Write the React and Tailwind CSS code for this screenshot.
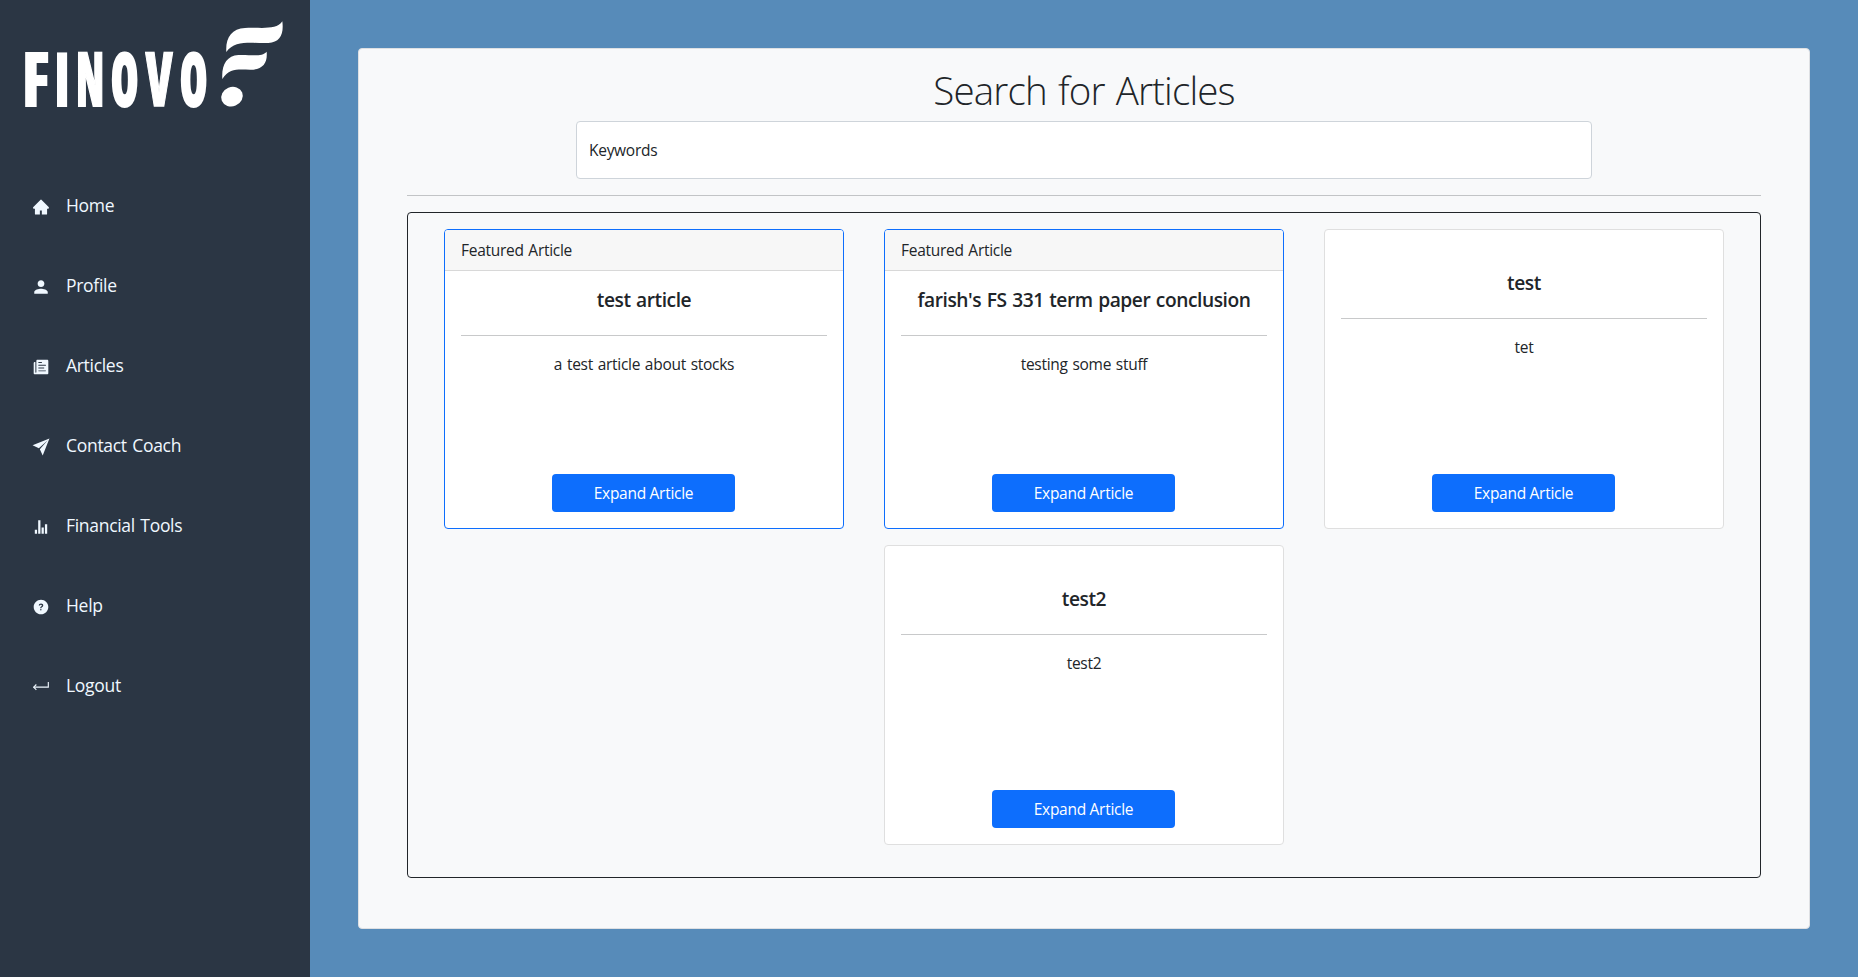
import { AiFillHome } from 'react-icons/ai';
import { IoIosHelpCircle, IoIosPaper, IoMdPerson, IoMdStats } from 'react-icons/io';
import { IoPaperPlaneSharp, IoReturnDownBackSharp } from 'react-icons/io5';

const NAV = [
  { label: 'Home', Icon: AiFillHome, offset: 'mt-1' },
  { label: 'Profile', Icon: IoMdPerson, offset: 'mt-1' },
  { label: 'Articles', Icon: IoIosPaper, offset: 'mt-1' },
  { label: 'Contact Coach', Icon: IoPaperPlaneSharp, offset: 'mt-1' },
  { label: 'Financial Tools', Icon: IoMdStats, offset: 'mt-1' },
  { label: 'Help', Icon: IoIosHelpCircle, offset: 'mt-1' },
  { label: 'Logout', Icon: IoReturnDownBackSharp, offset: 'mt-0.5' },
];

const ARTICLES = [
  { title: 'test article', text: 'a test article about stocks', featured: true },
  { title: "farish's FS 331 term paper conclusion", text: 'testing some stuff', featured: true },
  { title: 'test', text: 'tet', featured: false },
  { title: 'test2', text: 'test2', featured: false },
];

// Each letter of the wordmark has its own centre and horizontal squeeze.
const WORDMARK = [
  { char: 'F', x: 35.6, squeeze: 0.87, stroke: 0 },
  { char: 'I', x: 62, squeeze: 0.77, stroke: 0 },
  { char: 'N', x: 90, squeeze: 0.56, stroke: 2 },
  { char: 'O', x: 124.5, squeeze: 0.57, stroke: 3 },
  { char: 'V', x: 159, squeeze: 0.63, stroke: 1.5 },
  { char: 'O', x: 193.5, squeeze: 0.57, stroke: 3 },
];

function Logo() {
  return (
    <svg width="310" height="130" viewBox="0 0 310 130" fill="#fff" role="img" className="block">
      {WORDMARK.map(({ char, x, squeeze, stroke }, i) => (
        <text
          key={i}
          transform={`translate(${x} ${107 - stroke / 2}) scale(${squeeze} ${1 - stroke * 0.018})`}
          textAnchor="middle"
          stroke="#fff"
          strokeWidth={stroke}
          className="font-['Open_Sans',sans-serif] text-[77px] font-extrabold [font-stretch:75%]"
        >
          {char}
        </text>
      ))}
      <g transform="translate(210 10) scale(0.3333)">
        <path d="M49 126C46 85 64 56 105 54C150 51 199 62 217 34C222 74 210 96 175 99C130 101 75 88 49 126Z" />
        <path d="M37 207C34 165 50 137 85 135C120 133 154 143 170 125C173 158 160 176 130 179C95 181 61 169 37 207Z" />
        <ellipse cx="66" cy="260" rx="33" ry="29" transform="rotate(-22 66 260)" />
      </g>
    </svg>
  );
}

function Sidebar() {
  return (
    <aside className="flex w-[310px] shrink-0 flex-col bg-[#2b3644]">
      <Logo />
      <nav className="flex flex-col pt-[35px]">
        {NAV.map(({ label, Icon, offset }) => (
          <a
            key={label}
            className="flex h-20 items-center pl-8 text-[17.5px] tracking-[-0.3px] text-[#f0f8ff] [word-spacing:1.2px]"
          >
            <Icon size={18} className={`${offset} shrink-0`} />
            <span className="ml-4">{label}</span>
          </a>
        ))}
      </nav>
    </aside>
  );
}

function ArticleCard({ title, text, featured }) {
  return (
    <article
      className={
        featured
          ? 'flex h-[300px] w-[400px] flex-col overflow-hidden rounded border border-[#0d6efd] bg-white'
          : 'flex h-[300px] w-[400px] flex-col overflow-hidden rounded border border-[#dfdfdf] bg-white'
      }
    >
      {featured && (
        <header className="border-b border-[#d8d8d8] bg-[#f7f7f7] px-4 py-2">Featured Article</header>
      )}
      <div className="flex grow flex-col items-center p-4">
        {!featured && <div className="h-6" />}
        <h5 className="pt-px text-[19.2px] leading-6 font-semibold tracking-[-0.45px] [word-spacing:1px]">{title}</h5>
        <hr className="mt-[23px] mb-4 w-full border-[#c8c9ca]" />
        <p>{text}</p>
        <button className="mt-auto mr-px h-[38px] w-[183px] rounded bg-[#0d6efd] text-white">Expand Article</button>
      </div>
    </article>
  );
}

export default function App() {
  return (
    <div className="flex h-[977px] bg-[#578bb9] font-['Open_Sans',sans-serif] text-[15.5px] leading-6 tracking-[-0.28px] text-[#212529] [word-spacing:1px]">
      <Sidebar />
      <main className="grow p-12">
        <section className="flex h-[881px] w-[1452px] flex-col items-center rounded border border-[#dee0e3] bg-[#f8f9fa] px-12 pt-4">
          <h1 className="mb-[6px] text-[38.5px] leading-[50px] font-light tracking-[-0.85px] [word-spacing:2px]">
            Search for Articles
          </h1>
          <div className="flex h-[58px] w-[1016px] items-center rounded border border-[#ced4da] bg-white px-3">
            Keywords
          </div>
          <hr className="my-4 w-full border-[#c2c4c6]" />
          <div className="flex h-[666px] w-full flex-wrap content-start justify-center gap-x-10 gap-y-4 rounded border border-[#212529] pt-4">
            {ARTICLES.map((article) => (
              <ArticleCard key={article.title} {...article} />
            ))}
          </div>
        </section>
      </main>
    </div>
  );
}
